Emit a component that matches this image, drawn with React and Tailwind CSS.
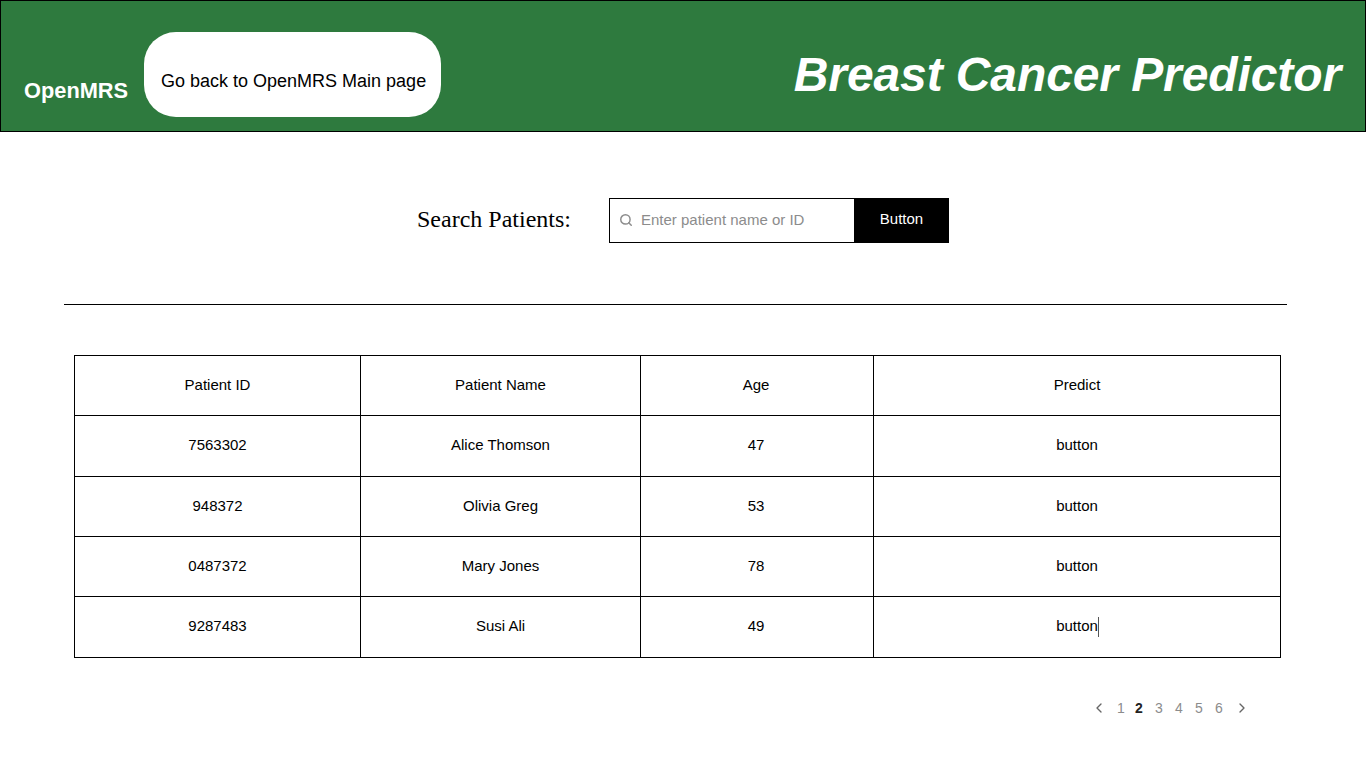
import React from 'react';
import { Search, ChevronLeft, ChevronRight } from 'lucide-react';

const patients = [
  { id: '7563302', name: 'Alice Thomson', age: '47' },
  { id: '948372', name: 'Olivia Greg', age: '53' },
  { id: '0487372', name: 'Mary Jones', age: '78' },
  { id: '9287483', name: 'Susi Ali', age: '49' },
];

const rowHeights = ['h-[61px] pb-[2px]', 'h-[60px]', 'h-[60px]', 'h-[61px] pb-[2px]'];
const cell = 'flex items-center justify-center border-r border-b border-black';

const App = () => {
  return (
    <div className="w-[1366px] h-[768px] bg-white text-black font-['Liberation_Sans',sans-serif] overflow-hidden">
      <header className="h-[132px] bg-[#2e7a3e] border border-black flex items-start pl-[23px] pr-[24px]">
        <span className="mt-[75px] w-[120px] text-[21.8px] leading-[30px] font-bold text-white">OpenMRS</span>
        <button className="mt-[31px] w-[297px] h-[85px] bg-white rounded-[32px] text-[18px] pl-[17px] pr-[14px] pt-[14px] flex items-center whitespace-nowrap">
          Go back to OpenMRS Main page
        </button>
        <h1 className="ml-auto mt-[44px] text-[48px] leading-[60px] font-bold italic text-white tracking-[-0.1px] whitespace-nowrap">
          Breast Cancer Predictor
        </h1>
      </header>

      <div className="mt-[66px] h-[45px] flex items-center pl-[417px]">
        <label className="w-[192px] text-[24px] leading-[30px] pb-[4px] font-['Liberation_Serif',serif]">Search Patients:</label>
        <div className="w-[340px] h-[45px] flex border border-black">
          <div className="flex-1 flex items-center pl-[10px] gap-[7px]">
            <Search className="w-[14px] h-[14px] mb-[2px] -ml-[1px] mr-[1px] text-[#8c8c8c]" strokeWidth={2.5} />
            <span className="text-[15px] pb-[1px] text-[#8c8c8c]">Enter patient name or ID</span>
          </div>
          <button className="w-[94px] bg-black text-white text-[15px] flex items-center justify-center pb-[2px] pl-[1px]">Button</button>
        </div>
      </div>

      <hr className="mt-[61px] ml-[64px] w-[1223px] border-black" />

      <div className="mt-[50px] ml-[74px] w-[1207px] grid grid-cols-[286px_280px_233px_407px] border-l border-t border-black text-[15px]">
        <div className={`${cell} h-[60px]`}>Patient ID</div>
        <div className={`${cell} h-[60px]`}>Patient Name</div>
        <div className={`${cell} h-[60px] pr-[2px]`}>Age</div>
        <div className={`${cell} h-[60px]`}>Predict</div>
        {patients.map((p, i) => (
          <React.Fragment key={p.id}>
            <div className={`${cell} ${rowHeights[i]}`}>{p.id}</div>
            <div className={`${cell} ${rowHeights[i]}`}>{p.name}</div>
            <div className={`${cell} ${rowHeights[i]} pr-[2px]`}>{p.age}</div>
            <div className={`${cell} ${rowHeights[i]} relative`}>
              button
              {i === 3 && <span className="absolute left-[224px] top-[20px] w-px h-[20px] bg-[#555]" />}
            </div>
          </React.Fragment>
        ))}
      </div>

      <div className="mt-[40px] ml-[1091px] flex items-center h-[20px] text-[14px] text-[#8c8c8c]">
        <ChevronLeft className="w-[16px] h-[16px] mr-[4px] text-[#666]" strokeWidth={2} />
        <span className="w-[20px] text-center">1</span>
        <span className="w-[16px] text-center font-bold text-[#222]">2</span>
        <span className="w-[24px] text-center">3</span>
        <span className="w-[16px] text-center">4</span>
        <span className="w-[24px] text-center">5</span>
        <span className="w-[16px] text-center">6</span>
        <ChevronRight className="w-[16px] h-[16px] ml-[7px] text-[#666]" strokeWidth={2} />
      </div>
    </div>
  );
};

export default App;
